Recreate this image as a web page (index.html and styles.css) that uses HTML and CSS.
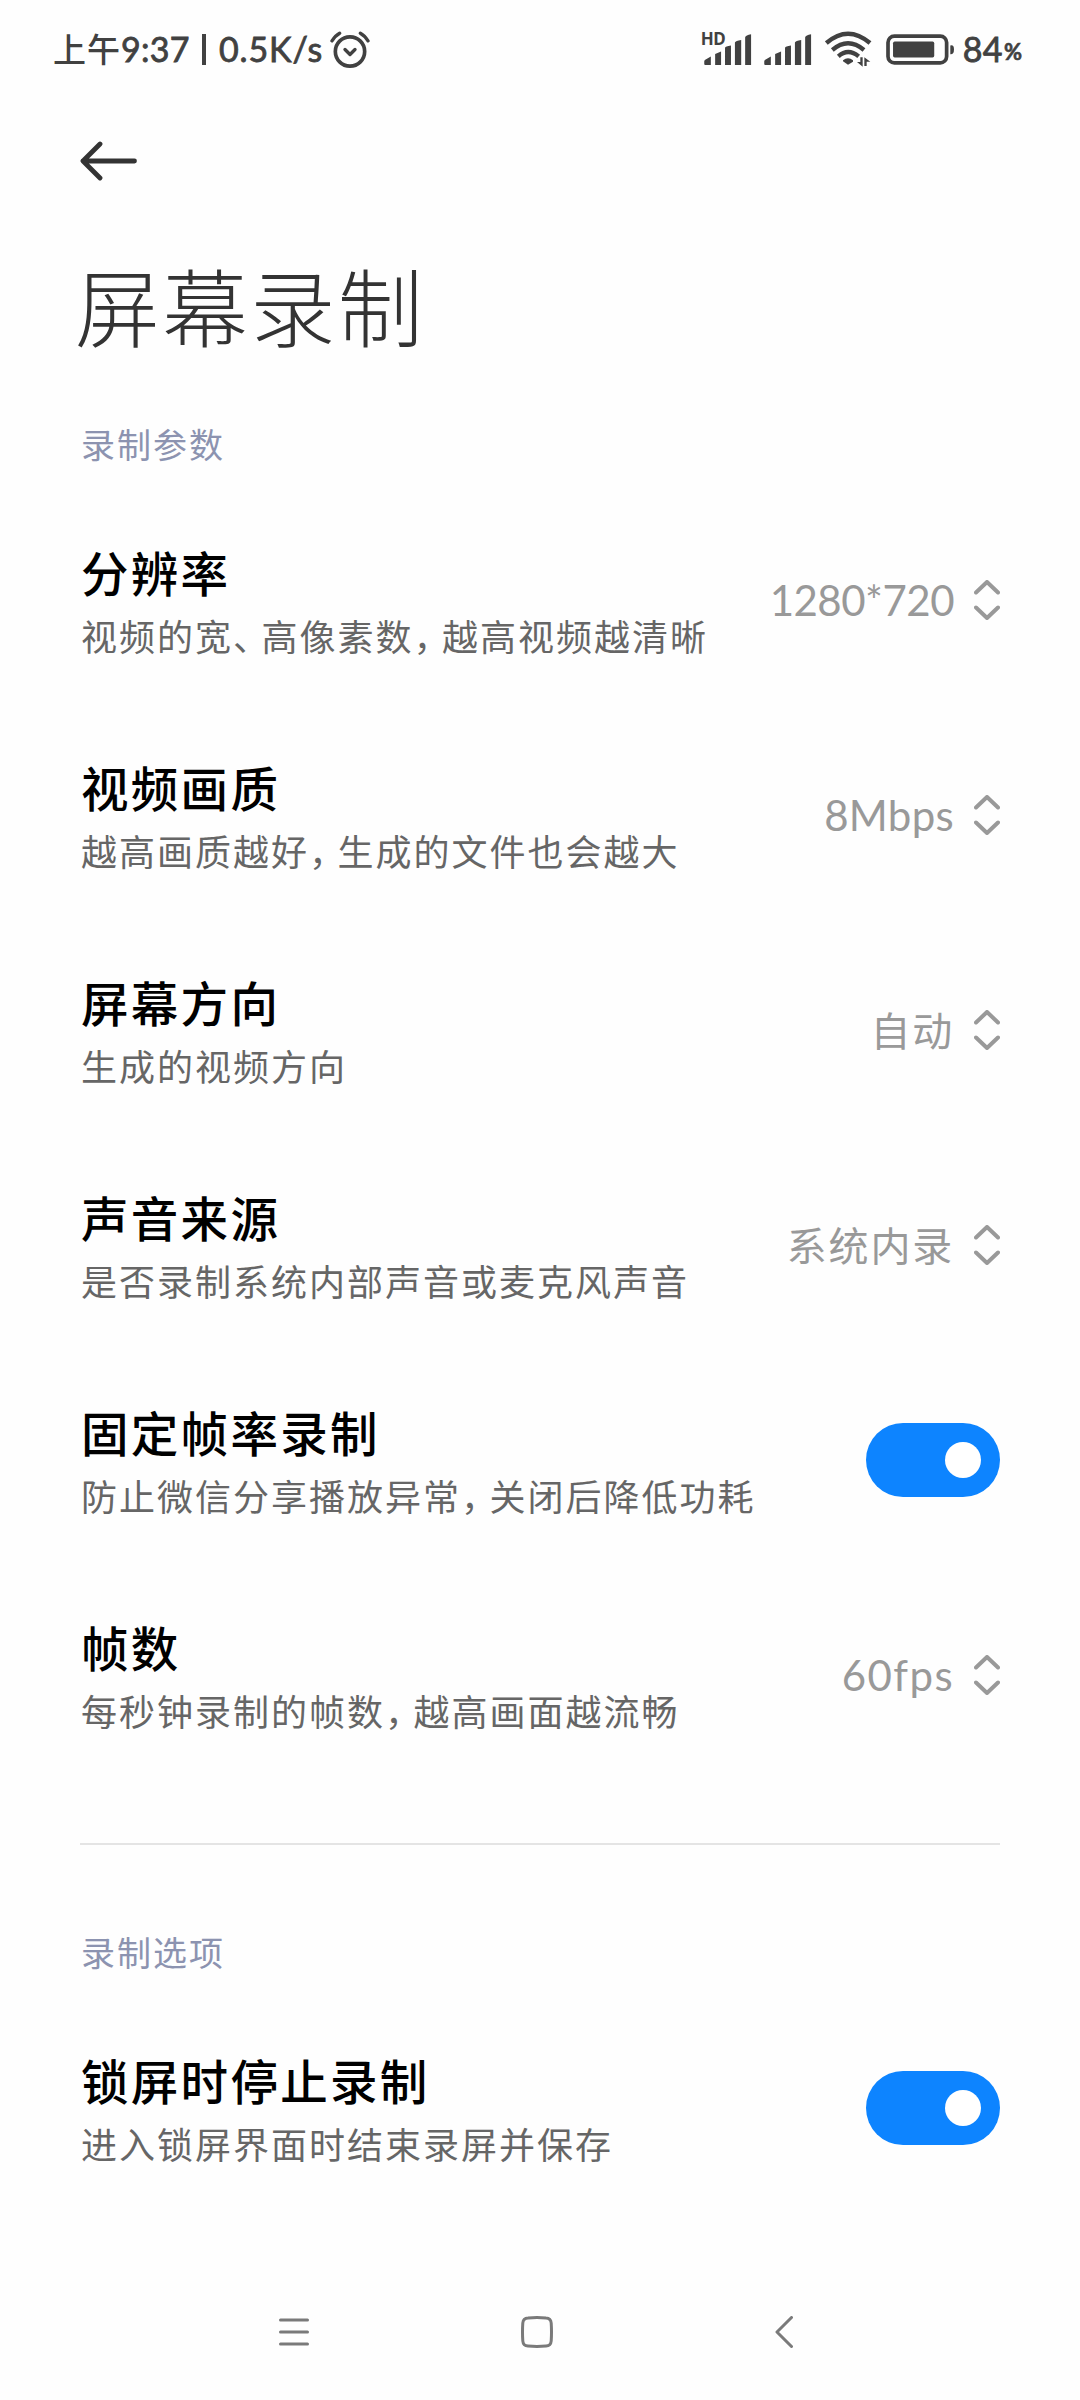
FILE: index.html
```html
<!DOCTYPE html>
<html lang="zh-CN">
<head>
    <meta charset="UTF-8">
    <meta name="viewport" content="width=device-width, initial-scale=1.0">
    <title>屏幕录制</title>
    <link rel="stylesheet" href="styles.css">
</head>
<body>
    <div class="status-bar">
        <div class="status-left">
            <span class="period">上午</span><span class="time">9:37</span><span class="sep"></span><span class="speed">0.5K/s</span>
            <svg class="alarm" viewBox="0 0 120 110"><g fill="none" stroke="#414141" stroke-linecap="round" stroke-linejoin="round"><circle cx="60" cy="61" r="44" stroke-width="11"/><path d="M6 29Q16 13 29 6M91 6Q104 13 114 29" stroke-width="10"/><path d="M45 55L60 70L75 55" stroke-width="10"/></g></svg>
        </div>
        <div class="status-right">
            <div class="signal-hd">
                <span class="hd">HD</span>
                <svg class="signal" viewBox="0 0 144 94"><path d="M3 78L20 68V94H3Q0 94 0 91V83Q0 80 3 78ZM33 61L51 53V94H33ZM63 42Q64 37 81 35V94H63ZM93 26Q95 20 112 18V94H93ZM124 10Q126 4 142 1V94H124Z" fill="#414141"/></svg>
            </div>
            <svg class="signal signal2" viewBox="0 0 144 94"><path d="M3 78L20 68V94H3Q0 94 0 91V83Q0 80 3 78ZM33 61L51 53V94H33ZM63 42Q64 37 81 35V94H63ZM93 26Q95 20 112 18V94H93ZM124 10Q126 4 142 1V94H124Z" fill="#414141"/></svg>
            <svg class="wifi" viewBox="0 0 141 108"><g fill="none" stroke="#414141" stroke-width="13"><path d="M4 36Q69-20 135 36"/><path d="M22 57Q69 17 117 57"/><path d="M40 76Q69 50 101 76"/></g><path d="M54 88Q69 76 84 88V92L69 101L54 91Z" fill="#414141"/><path d="M113 79V107L96 93H106V79ZM118 79V105H125V92H136Z" fill="#414141"/></svg>
            <svg class="battery" viewBox="0 0 206 92"><rect x="6" y="6" width="175" height="80" rx="19" fill="none" stroke="#414141" stroke-width="11"/><rect x="21" y="22" width="123" height="48" rx="5" fill="#414141"/><path d="M192 34Q203 31 203 46T192 60Z" fill="#414141"/></svg>
            <span class="level">84</span><span class="percent">%</span>
        </div>
    </div>

    <div class="header">
        <svg class="back" viewBox="0 0 57 40"><path d="M20 3L3 20L20 37M3 20H54.500" fill="none" stroke="#333" stroke-width="4.800" stroke-linecap="round" stroke-linejoin="round"/></svg>
        <h1>屏幕录制</h1>
    </div>

    <div class="settings">
        <h2 class="first">录制参数</h2>
        <div class="row">
            <div class="text">
                <div class="title">分辨率</div>
                <div class="desc">视频的宽<i>、</i>高像素数<i>，</i>越高视频越清晰</div>
            </div>
            <div class="value num"><span>1280*720</span><svg class="arrows" viewBox="0 0 26 40"><path d="M2 12.500L13 2L24 12.500M2 27.500L13 38L24 27.500"/></svg></div>
        </div>
        <div class="row">
            <div class="text">
                <div class="title">视频画质</div>
                <div class="desc">越高画质越好<i>，</i>生成的文件也会越大</div>
            </div>
            <div class="value"><span>8Mbps</span><svg class="arrows" viewBox="0 0 26 40"><path d="M2 12.500L13 2L24 12.500M2 27.500L13 38L24 27.500"/></svg></div>
        </div>
        <div class="row">
            <div class="text">
                <div class="title">屏幕方向</div>
                <div class="desc">生成的视频方向</div>
            </div>
            <div class="value zh"><span>自动</span><svg class="arrows" viewBox="0 0 26 40"><path d="M2 12.500L13 2L24 12.500M2 27.500L13 38L24 27.500"/></svg></div>
        </div>
        <div class="row">
            <div class="text">
                <div class="title">声音来源</div>
                <div class="desc">是否录制系统内部声音或麦克风声音</div>
            </div>
            <div class="value zh"><span>系统内录</span><svg class="arrows" viewBox="0 0 26 40"><path d="M2 12.500L13 2L24 12.500M2 27.500L13 38L24 27.500"/></svg></div>
        </div>
        <div class="row">
            <div class="text">
                <div class="title">固定帧率录制</div>
                <div class="desc">防止微信分享播放异常<i>，</i>关闭后降低功耗</div>
            </div>
            <div class="switch"></div>
        </div>
        <div class="row">
            <div class="text">
                <div class="title">帧数</div>
                <div class="desc">每秒钟录制的帧数<i>，</i>越高画面越流畅</div>
            </div>
            <div class="value fps"><span>60fps</span><svg class="arrows" viewBox="0 0 26 40"><path d="M2 12.500L13 2L24 12.500M2 27.500L13 38L24 27.500"/></svg></div>
        </div>
        <div class="divider"></div>
        <h2>录制选项</h2>
        <div class="row">
            <div class="text">
                <div class="title">锁屏时停止录制</div>
                <div class="desc">进入锁屏界面时结束录屏并保存</div>
            </div>
            <div class="switch"></div>
        </div>
    </div>

    <div class="nav-bar">
        <svg class="nav-menu" viewBox="0 0 30 28"><path d="M1.500 2H28.500M1.500 14H28.500M1.500 26H28.500"/></svg>
        <svg class="nav-home" viewBox="0 0 32 32"><path d="M7 2Q16 1.200 25 2Q29.800 2.200 30.200 7Q30.800 16 30.200 25Q29.800 29.800 25 30Q16 30.800 7 30Q2.200 29.800 1.800 25Q1.200 16 1.800 7Q2.200 2.200 7 2Z"/></svg>
        <svg class="nav-back" viewBox="0 0 18 32"><path d="M16.500 1.500L2 16L16.500 30.500"/></svg>
    </div>
</body>
</html>
```
FILE: styles.css
```css
* { box-sizing: border-box; }
body { font-family: Lato, "Noto Sans CJK SC", sans-serif; background: #fefefe; margin: 0; height: 2400px; display: flex; flex-direction: column; overflow: hidden; }
svg { display: block; flex: none; }

.status-bar { height: 98px; padding: 0 58px 0 53px; display: flex; justify-content: space-between; align-items: center; color: #414141; font-size: 34px; line-height: 40px; white-space: nowrap; }
.status-left, .status-right { display: flex; align-items: center; }
.period { font-size: 33px; letter-spacing: 1px; font-weight: 500; }
.time { letter-spacing: 0.3px; -webkit-text-stroke: 0.8px #414141; }
.sep { width: 4px; height: 31px; margin: 0 13px 0 12px; background: #414141; }
.speed { letter-spacing: 0.9px; -webkit-text-stroke: 0.8px #414141; }
.alarm { width: 40px; height: 37px; margin-left: 7px; }
.signal-hd { position: relative; }
.signal { width: 48px; height: 31px; }
.hd { position: absolute; left: -3px; top: -5px; font-family: "Noto Sans", sans-serif; font-size: 17px; font-weight: bold; line-height: 20px; letter-spacing: -0.5px; }
.signal2 { margin-left: 12px; }
.wifi { width: 47px; height: 36px; margin: 0 14px 0 13px; }
.battery { width: 69px; height: 31px; }
.level { margin-left: 8px; letter-spacing: 0.4px; -webkit-text-stroke: 0.8px #414141; }
.percent { margin-left: 1px; font-size: 22px; font-weight: bold; align-self: flex-end; line-height: 35px; -webkit-text-stroke: 0.6px #414141; }

.header { height: 296px; padding: 43px 80px 0; }
.back { width: 57px; height: 40px; }
h1 { margin: 62px 0 0 -5px; font-size: 85px; font-weight: 300; line-height: 130px; letter-spacing: 2.600px; color: #333; }

.settings { flex: 1; padding: 0 80px; }
h2 { margin: 0 0 0 1px; height: 96px; font-size: 34px; font-weight: normal; line-height: 97px; letter-spacing: 2px; color: #8c93b0; }
h2.first { height: 98px; line-height: 102px; }
.row { height: 215px; display: flex; justify-content: space-between; align-items: center; }
.text { padding: 8px 0 0 1px; white-space: nowrap; }
.title { font-size: 47.500px; font-weight: 500; line-height: 67px; letter-spacing: 2.300px; color: #000; }
.desc { font-size: 36px; line-height: 60px; letter-spacing: 2px; color: #666; }
.desc i { font-style: normal; font-feature-settings: "halt"; margin-right: 8.500px; }
.value { display: flex; align-items: center; font-size: 42px; line-height: 60px; letter-spacing: 0.3px; color: #999; }
.value.num { letter-spacing: -0.5px; }
.value.fps { letter-spacing: 1.400px; }
.value.zh { font-size: 40px; letter-spacing: 1.800px; padding-top: 2px; }
.arrows { width: 26px; height: 40px; margin-left: 20px; }
.zh .arrows { margin-top: -2px; }
.arrows path { fill: none; stroke: #999; stroke-width: 4; stroke-linecap: round; stroke-linejoin: round; }
.switch { width: 134px; height: 74px; padding: 19px; border-radius: 37px; background: #0d84ff; display: flex; justify-content: flex-end; }
.switch::after { content: ""; width: 36px; height: 36px; border-radius: 50%; background: #fff; }
.divider { height: 2px; margin: 61px 0 59px; background: #e4e4e4; }

.nav-bar { height: 137px; padding-left: 279px; display: flex; align-items: center; }
.nav-bar path { fill: none; stroke: #7a7a7a; stroke-width: 3; stroke-linecap: round; stroke-linejoin: round; }
.nav-menu { width: 30px; height: 28px; }
.nav-home { width: 32px; height: 32px; margin: 0 222px 0 212px; }
.nav-back { width: 18px; height: 32px; }
```
